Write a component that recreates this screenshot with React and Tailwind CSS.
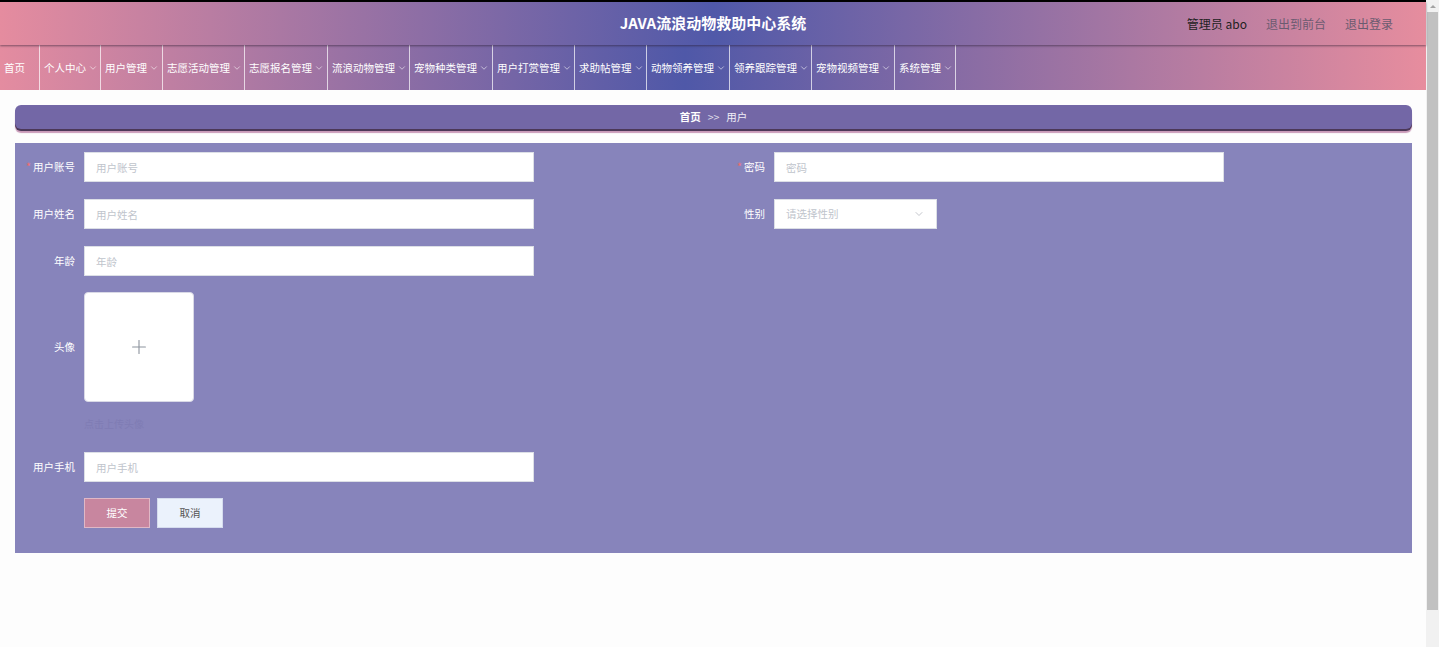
import { ChevronDown, Plus } from 'lucide-react'

const MENUS = [
  { name: '首页', w: 'w-[40px]', arrow: false },
  { name: '个人中心', w: 'w-[61px]', arrow: true },
  { name: '用户管理', w: 'w-[62px]', arrow: true },
  { name: '志愿活动管理', w: 'w-[82px]', arrow: true },
  { name: '志愿报名管理', w: 'w-[83px]', arrow: true },
  { name: '流浪动物管理', w: 'w-[82px]', arrow: true },
  { name: '宠物种类管理', w: 'w-[83px]', arrow: true },
  { name: '用户打赏管理', w: 'w-[82px]', arrow: true },
  { name: '求助帖管理', w: 'w-[72px]', arrow: true },
  { name: '动物领养管理', w: 'w-[83px]', arrow: true },
  { name: '领养跟踪管理', w: 'w-[82px]', arrow: true },
  { name: '宠物视频管理', w: 'w-[83px]', arrow: true },
  { name: '系统管理', w: 'w-[61px]', arrow: true },
]

const FONT = { fontFamily: '"Noto Sans CJK SC", "Noto Sans", sans-serif' }

function Label({ text, required }) {
  return (
    <label className="w-[69px] pr-[9px] flex-shrink-0 flex items-center justify-end text-[10.5px] text-white">
      {required && <span className="text-[#f56c6c] mr-[2px]">*</span>}
      {text}
    </label>
  )
}

function TextField({ label, required, placeholder }) {
  return (
    <div className="flex items-center h-[30px]">
      <Label text={label} required={required} />
      <input
        placeholder={placeholder}
        className="w-[450px] h-[30px] bg-white border border-[#dcdfe6] px-[11px] text-[10.5px] outline-none placeholder:text-[#c0c4cc]"
        style={FONT}
      />
    </div>
  )
}

export default function App() {
  return (
    <div className="flex w-[1439px] h-[647px] overflow-hidden bg-[#fdfdfd]" style={FONT}>
      <div className="flex-1 flex flex-col min-w-0">
        <div className="h-[2px] bg-black" />

        {/* Header */}
        <div className="relative z-10 h-[43px] flex items-center px-4 bg-[linear-gradient(to_right,#e58c9f,#5059a9_50%,#e68d9e)] shadow-[0_1px_2px_rgba(40,30,50,0.55)]">
          <div className="flex-1" />
          <h1 className="absolute left-1/2 -translate-x-1/2 text-white font-bold text-[15px]">JAVA流浪动物救助中心系统</h1>
          <div className="flex items-center gap-[19px] text-[12px] pr-[17px]">
            <span className="text-[#222]">管理员 abo</span>
            <span className="text-[#6b5b70]">退出到前台</span>
            <span className="text-[#6b5b70]">退出登录</span>
          </div>
        </div>

        {/* Nav */}
        <div className="h-[45px] flex bg-[linear-gradient(to_right,#e48ca0,#4f58a8_48%,#e78d9e)]">
          {MENUS.map(m => (
            <div
              key={m.name}
              className={`${m.w} h-full flex-shrink-0 flex items-center pl-[4px] border-r border-white/70 text-white text-[10.5px] whitespace-nowrap`}
            >
              {m.name}
              {m.arrow && <ChevronDown size={10} strokeWidth={1.5} className="ml-[2px] text-white/90" />}
            </div>
          ))}
        </div>

        {/* Content */}
        <div className="px-[15px] pt-[15px] pr-[14px]">
          <div className="h-[24px] rounded-[6px] bg-[#7367a6] flex items-center justify-center text-[10.5px] text-white shadow-[0_2px_0_#4c3858,0_4px_1px_#c99ab8]">
            <span className="font-bold">首页</span>
            <span className="mx-[7px] text-white/80">&gt;&gt;</span>
            <span className="text-white/90">用户</span>
          </div>

          <div className="mt-[14px] bg-[#8784bb] pt-[9px] pb-[25px] flex flex-col">
            <div className="flex">
              <div className="w-[690px]"><TextField label="用户账号" required placeholder="用户账号" /></div>
              <div className="w-[690px]"><TextField label="密码" required placeholder="密码" /></div>
            </div>
            <div className="flex mt-[17px]">
              <div className="w-[690px]"><TextField label="用户姓名" placeholder="用户姓名" /></div>
              <div className="w-[690px] flex items-center h-[30px]">
                <Label text="性别" />
                <div className="w-[163px] h-[30px] bg-white border border-[#dcdfe6] px-[11px] flex items-center justify-between text-[10.5px] text-[#c0c4cc]">
                  <span>请选择性别</span>
                  <ChevronDown size={12} strokeWidth={1.5} className="text-[#b0b3bb]" />
                </div>
              </div>
            </div>
            <div className="mt-[17px]"><TextField label="年龄" placeholder="年龄" /></div>

            <div className="mt-[16px] flex">
              <div className="w-[69px] pr-[9px] h-[110px] flex items-center justify-end text-[10.5px] text-white">头像</div>
              <div className="flex flex-col">
                <div className="w-[110px] h-[110px] bg-white rounded-[4px] border border-[#d9d9e6] flex items-center justify-center">
                  <Plus size={22} strokeWidth={1.2} className="text-[#8c939d]" />
                </div>
                <div className="mt-[14px] text-[10px] text-[#7f7cb4]">点击上传头像</div>
              </div>
            </div>

            <div className="mt-[21px]"><TextField label="用户手机" placeholder="用户手机" /></div>

            <div className="mt-[16px] flex pl-[69px] gap-[7px]">
              <button className="w-[66px] h-[30px] bg-[#c8869f] border border-[#e0b8c6] text-white text-[10.5px]">提交</button>
              <button className="w-[66px] h-[30px] bg-[#ebf2fc] border border-[#d5dcee] text-[#555] text-[10.5px]">取消</button>
            </div>
          </div>
        </div>
      </div>

      {/* Scrollbar */}
      <div className="w-[13px] flex-shrink-0 bg-[#f1f1f1] flex flex-col">
        <div className="h-[12px] flex items-center justify-center">
          <div className="w-0 h-0 border-l-[3px] border-r-[3px] border-b-[3px] border-l-transparent border-r-transparent border-b-[#a3a3a3]" />
        </div>
        <div className="mx-[1px] h-[598px] bg-[#c1c1c1]" />
      </div>
    </div>
  )
}
